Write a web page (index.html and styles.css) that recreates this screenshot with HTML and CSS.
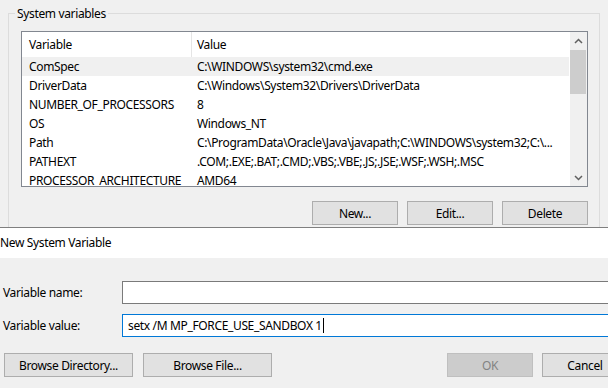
FILE: index.html
```html
<!DOCTYPE html>
<html lang="en">
<head>
  <meta charset="utf-8" />
  <title>Environment Variables</title>
  <meta name="viewport" content="width=device-width, initial-scale=1.0">
  <link rel="stylesheet" href="styles.css">
</head>
<body>
  <div class="window">
    <fieldset class="group">
      <legend>System variables</legend>
      <div class="group-body">
        <div class="listbox">
          <div class="list">
            <div class="row head"><span class="c1">Variable</span><span class="c2">Value</span></div>
            <div class="row sel"><span class="c1">ComSpec</span><span class="c2">C:\WINDOWS\system32\cmd.exe</span></div>
            <div class="row"><span class="c1">DriverData</span><span class="c2">C:\Windows\System32\Drivers\DriverData</span></div>
            <div class="row"><span class="c1">NUMBER_OF_PROCESSORS</span><span class="c2">8</span></div>
            <div class="row"><span class="c1">OS</span><span class="c2">Windows_NT</span></div>
            <div class="row"><span class="c1">Path</span><span class="c2">C:\ProgramData\Oracle\Java\javapath;C:\WINDOWS\system32;C:\...</span></div>
            <div class="row"><span class="c1">PATHEXT</span><span class="c2">.COM;.EXE;.BAT;.CMD;.VBS;.VBE;.JS;.JSE;.WSF;.WSH;.MSC</span></div>
            <div class="row"><span class="c1">PROCESSOR_ARCHITECTURE</span><span class="c2">AMD64</span></div>
          </div>
          <div class="scrollbar">
            <div class="sb-arrow">
              <svg width="9" height="6" viewBox="0 0 9 6"><polyline points="1,5 4.5,1.5 8,5" fill="none" stroke="#606060" stroke-width="1.5"/></svg>
            </div>
            <div class="thumb"></div>
            <div class="sb-arrow down">
              <svg width="9" height="6" viewBox="0 0 9 6"><polyline points="1,1 4.5,4.5 8,1" fill="none" stroke="#606060" stroke-width="1.5"/></svg>
            </div>
          </div>
        </div>
        <div class="actions">
          <button class="btn">New...</button>
          <button class="btn">Edit...</button>
          <button class="btn">Delete</button>
        </div>
      </div>
    </fieldset>
  </div>

  <div class="dialog">
    <div class="titlebar">New System Variable</div>
    <div class="dialog-body">
      <div class="field">
        <label>Variable name:</label>
        <div class="textbox"></div>
      </div>
      <div class="field">
        <label>Variable value:</label>
        <div class="textbox focus">setx /M MP_FORCE_USE_SANDBOX 1<span class="caret"></span></div>
      </div>
      <div class="dialog-actions">
        <div class="btn-group">
          <button class="btn wide">Browse Directory...</button>
          <button class="btn wide">Browse File...</button>
        </div>
        <div class="btn-group right">
          <button class="btn" disabled>OK</button>
          <button class="btn">Cancel</button>
        </div>
      </div>
    </div>
  </div>
</body>
</html>
```

FILE: styles.css
```css
body {
  margin: 0;
  background: #f0f0f0;
  font-family: "Segoe UI", "Noto Sans", sans-serif;
  font-size: 12px;
  line-height: 16px;
  letter-spacing: -0.35px;
  color: #000;
  overflow: hidden;
}
.window {
  height: 227px;
  overflow: hidden;
  padding: 5px 0 0 8px;
  box-sizing: border-box;
}
.group {
  margin: 0;
  padding: 0;
  width: 592px;
  min-width: 0;
  box-sizing: border-box;
  border: 1px solid #dcdcdc;
}
.group legend {
  margin-left: 6px;
  padding: 0 2px;
  line-height: 17px;
}
.group-body {
  padding: 9px 11px 20px 12px;
}
.listbox {
  display: flex;
  height: 156px;
  box-sizing: border-box;
  border: 1px solid #828790;
  background: #fff;
}
.list {
  flex: 1;
  min-width: 0;
  overflow: hidden;
  padding-right: 1px;
}
.row {
  display: flex;
  align-items: center;
  height: 19px;
  white-space: nowrap;
}
.row.sel {
  background: #f0f0f0;
}
.row .c1 {
  flex: none;
  width: 170px;
  padding-left: 7px;
  box-sizing: border-box;
}
.row .c2 {
  padding-left: 5px;
}
.row.head {
  height: 25px;
  align-items: stretch;
}
.row.head span {
  line-height: 25px;
}
.row.head .c1 {
  border-right: 1px solid #e5e5e5;
}
.scrollbar {
  flex: none;
  width: 17px;
  display: flex;
  flex-direction: column;
  background: #f0f0f0;
}
.sb-arrow {
  height: 17px;
  display: flex;
  align-items: center;
  justify-content: center;
}
.sb-arrow.down {
  margin-top: auto;
}
.thumb {
  height: 44px;
  margin: 1px 1px 0 0;
  background: #cdcdcd;
}
.actions {
  display: flex;
  justify-content: flex-end;
  gap: 9px;
  margin-top: 14px;
}
.btn {
  width: 86px;
  height: 24px;
  padding: 0;
  border: 1px solid #adadad;
  background: #e1e1e1;
  font-family: inherit;
  font-size: 12px;
  letter-spacing: inherit;
  color: #000;
}
.btn:disabled {
  background: #cccccc;
  border-color: #bfbfbf;
  color: #838383;
}
.btn.wide {
  width: 129px;
}
.dialog {
  width: 640px;
  border-top: 1px solid #7f7f7f;
}
.titlebar {
  height: 30px;
  line-height: 30px;
  background: #fff;
}
.dialog-body {
  padding: 23px 12px 0 3px;
}
.field {
  display: flex;
  align-items: center;
}
.field + .field {
  margin-top: 10px;
}
.field label {
  flex: none;
  width: 119px;
}
.textbox {
  flex: 1;
  height: 23px;
  box-sizing: border-box;
  border: 1px solid #7a7a7a;
  background: #fff;
  padding-left: 5px;
  line-height: 21px;
}
.textbox.focus {
  border-color: #0078d7;
}
.caret {
  display: inline-block;
  width: 1px;
  height: 15px;
  margin-left: 1px;
  background: #000;
  vertical-align: -3px;
}
.dialog-actions {
  display: flex;
  justify-content: space-between;
  margin-top: 16px;
  padding-left: 1px;
}
.btn-group {
  display: flex;
  gap: 10px;
}
.btn-group.right {
  gap: 9px;
}
```
